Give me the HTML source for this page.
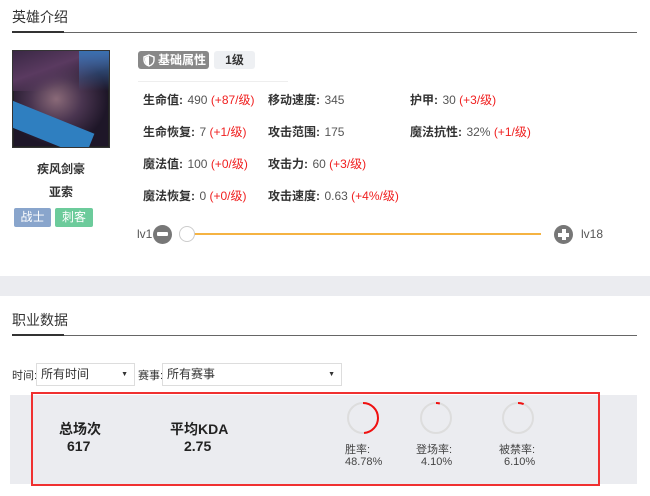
<!DOCTYPE html>
<html><head><meta charset="utf-8"><style>
*{margin:0;padding:0;box-sizing:border-box}
body{width:650px;height:496px;background:#fff;font-family:"Liberation Sans","Noto Sans CJK SC",sans-serif;position:relative;overflow:hidden;color:#333}
.a{position:absolute;white-space:nowrap}
.lab{font-size:12px;color:#333;font-weight:bold}
.val{font-size:12px;color:#555}
.r{color:#f02020}
.t{font-size:12px}
</style></head><body>
<div class="a" style="left:12px;top:7px;font-size:14px;color:#333">英雄介绍</div>
<div class="a" style="left:12px;top:32px;width:625px;height:1px;background:#666"></div>
<div class="a" style="left:12px;top:31px;width:52px;height:2px;background:#333"></div>

<div class="a" style="left:12px;top:50px;width:98px;height:98px;background:#222;border:1px solid #333;overflow:hidden">
<div style="position:absolute;inset:1px;background:radial-gradient(ellipse at 45% 50%,#8a6a78 0%,#4a3550 35%,#1e1628 70%),#1e1628"></div>
<div style="position:absolute;left:0;top:0;width:98px;height:40px;background:linear-gradient(160deg,#3a2845,#5a3a60 40%,transparent 70%)"></div>
<div style="position:absolute;right:0;top:0;width:30px;height:40px;background:linear-gradient(#3a70b0,transparent)"></div>
<div style="position:absolute;left:-10px;top:65px;width:90px;height:25px;background:#2f7fc0;transform:rotate(22deg)"></div>
</div>
<div class="a" style="left:12px;top:160px;width:98px;text-align:center;font-size:12px;font-weight:bold">疾风剑豪</div>
<div class="a" style="left:12px;top:183px;width:98px;text-align:center;font-size:12px;font-weight:bold">亚索</div>
<div class="a" style="left:14px;top:208px;width:37px;height:19px;background:#89a5cc;border-radius:2px;color:#fff;font-size:12px;text-align:center;line-height:19px">战士</div>
<div class="a" style="left:55px;top:208px;width:38px;height:19px;background:#6ccb9b;border-radius:2px;color:#fff;font-size:12px;text-align:center;line-height:19px">刺客</div>

<div class="a" style="left:138px;top:51px;width:71px;height:18px;background:#888;border-radius:3px;color:#fff;font-size:12px;line-height:18px;padding-left:20px;font-weight:bold">基础属性</div>
<svg class="a" style="left:143px;top:54px" width="12" height="13" viewBox="0 0 12 13"><path d="M6 1 L11 3 V6 C11 9 9 11 6 12 C3 11 1 9 1 6 V3 Z" fill="none" stroke="#fff" stroke-width="1.4"/><path d="M6 2 V11.5 C3.5 10.5 2 9 2 6 V3.5Z" fill="#fff"/></svg>
<div class="a" style="left:214px;top:51px;width:41px;height:18px;background:#eef0f3;border-radius:3px;font-size:12px;line-height:18px;text-align:center;font-weight:bold">1级</div>
<div class="a" style="left:138px;top:81px;width:150px;height:1px;background:#eee"></div>

<div class="a" style="left:143px;top:91px"><span class="lab">生命值:</span> <span class="val">490 <span class="r">(+87/级)</span></span></div>
<div class="a" style="left:268px;top:91px"><span class="lab">移动速度:</span> <span class="val">345</span></div>
<div class="a" style="left:410px;top:91px"><span class="lab">护甲:</span> <span class="val">30 <span class="r">(+3/级)</span></span></div>
<div class="a" style="left:143px;top:123px"><span class="lab">生命恢复:</span> <span class="val">7 <span class="r">(+1/级)</span></span></div>
<div class="a" style="left:268px;top:123px"><span class="lab">攻击范围:</span> <span class="val">175</span></div>
<div class="a" style="left:410px;top:123px"><span class="lab">魔法抗性:</span> <span class="val">32% <span class="r">(+1/级)</span></span></div>
<div class="a" style="left:143px;top:155px"><span class="lab">魔法值:</span> <span class="val">100 <span class="r">(+0/级)</span></span></div>
<div class="a" style="left:268px;top:155px"><span class="lab">攻击力:</span> <span class="val">60 <span class="r">(+3/级)</span></span></div>
<div class="a" style="left:143px;top:187px"><span class="lab">魔法恢复:</span> <span class="val">0 <span class="r">(+0/级)</span></span></div>
<div class="a" style="left:268px;top:187px"><span class="lab">攻击速度:</span> <span class="val">0.63 <span class="r">(+4%/级)</span></span></div>

<div class="a val" style="left:137px;top:227px;font-size:12px">lv1</div>
<div class="a" style="left:153px;top:225px;width:19px;height:19px;border-radius:50%;background:#777"><div style="position:absolute;left:4px;top:7px;width:11px;height:4px;background:#fff;border-radius:1px"></div></div>
<div class="a" style="left:192px;top:233px;width:349px;height:2px;background:#f5b342"></div>
<div class="a" style="left:179px;top:226px;width:16px;height:16px;border-radius:50%;background:#fff;border:1px solid #ccc"></div>
<div class="a" style="left:554px;top:225px;width:19px;height:19px;border-radius:50%;background:#777"><div style="position:absolute;left:4px;top:7.5px;width:11px;height:4px;background:#fff"></div><div style="position:absolute;left:7.5px;top:4px;width:4px;height:11px;background:#fff"></div></div>
<div class="a val" style="left:581px;top:227px;font-size:12px">lv18</div>

<div class="a" style="left:0;top:276px;width:650px;height:20px;background:#ebecf0"></div>

<div class="a" style="left:12px;top:310px;font-size:14px;color:#333">职业数据</div>
<div class="a" style="left:12px;top:335px;width:625px;height:1px;background:#666"></div>
<div class="a" style="left:12px;top:334px;width:52px;height:2px;background:#333"></div>

<div class="a t" style="left:12px;top:367px;font-size:11px">时间:</div>
<div class="a" style="left:36px;top:363px;width:99px;height:23px;border:1px solid #ddd;font-size:12px;line-height:21px;padding-left:4px">所有时间<span style="position:absolute;right:6px;font-size:7px">▼</span></div>
<div class="a t" style="left:138px;top:367px;font-size:11px">赛事:</div>
<div class="a" style="left:162px;top:363px;width:180px;height:23px;border:1px solid #ddd;font-size:12px;line-height:21px;padding-left:4px">所有赛事<span style="position:absolute;right:6px;font-size:7px">▼</span></div>

<div class="a" style="left:10px;top:395px;width:627px;height:89px;background:#ebecf0"></div>
<div class="a" style="left:31px;top:392px;width:569px;height:94px;border:2px solid #f03030"></div>
<div class="a" style="left:59px;top:419px;font-size:14px;font-weight:bold;color:#222">总场次</div>
<div class="a" style="left:67px;top:438px;font-size:14px;font-weight:bold;color:#222">617</div>
<div class="a" style="left:170px;top:419px;font-size:14px;font-weight:bold;color:#222">平均KDA</div>
<div class="a" style="left:184px;top:438px;font-size:14px;font-weight:bold;color:#222">2.75</div>

<svg class="a" style="left:0;top:0" width="650" height="496">
<g fill="none" stroke-width="2">
<circle cx="363" cy="418" r="15" stroke="#ddd"/>
<circle cx="363" cy="418" r="15" stroke="#f01010" stroke-dasharray="46 100" transform="rotate(-90 363 418)"/>
<circle cx="436" cy="418" r="15" stroke="#ddd"/>
<circle cx="436" cy="418" r="15" stroke="#f01010" stroke-dasharray="3.9 100" transform="rotate(-90 436 418)"/>
<circle cx="518" cy="418" r="15" stroke="#ddd"/>
<circle cx="518" cy="418" r="15" stroke="#f01010" stroke-dasharray="5.8 100" transform="rotate(-90 518 418)"/>
</g></svg>
<div class="a" style="left:345px;top:441px;font-size:11px;color:#444">胜率:</div>
<div class="a" style="left:345px;top:456px;font-size:11px;color:#444">48.78%</div>
<div class="a" style="left:416px;top:441px;font-size:11px;color:#444">登场率:</div>
<div class="a" style="left:421px;top:456px;font-size:11px;color:#444">4.10%</div>
<div class="a" style="left:499px;top:441px;font-size:11px;color:#444">被禁率:</div>
<div class="a" style="left:504px;top:456px;font-size:11px;color:#444">6.10%</div>
</body></html>
